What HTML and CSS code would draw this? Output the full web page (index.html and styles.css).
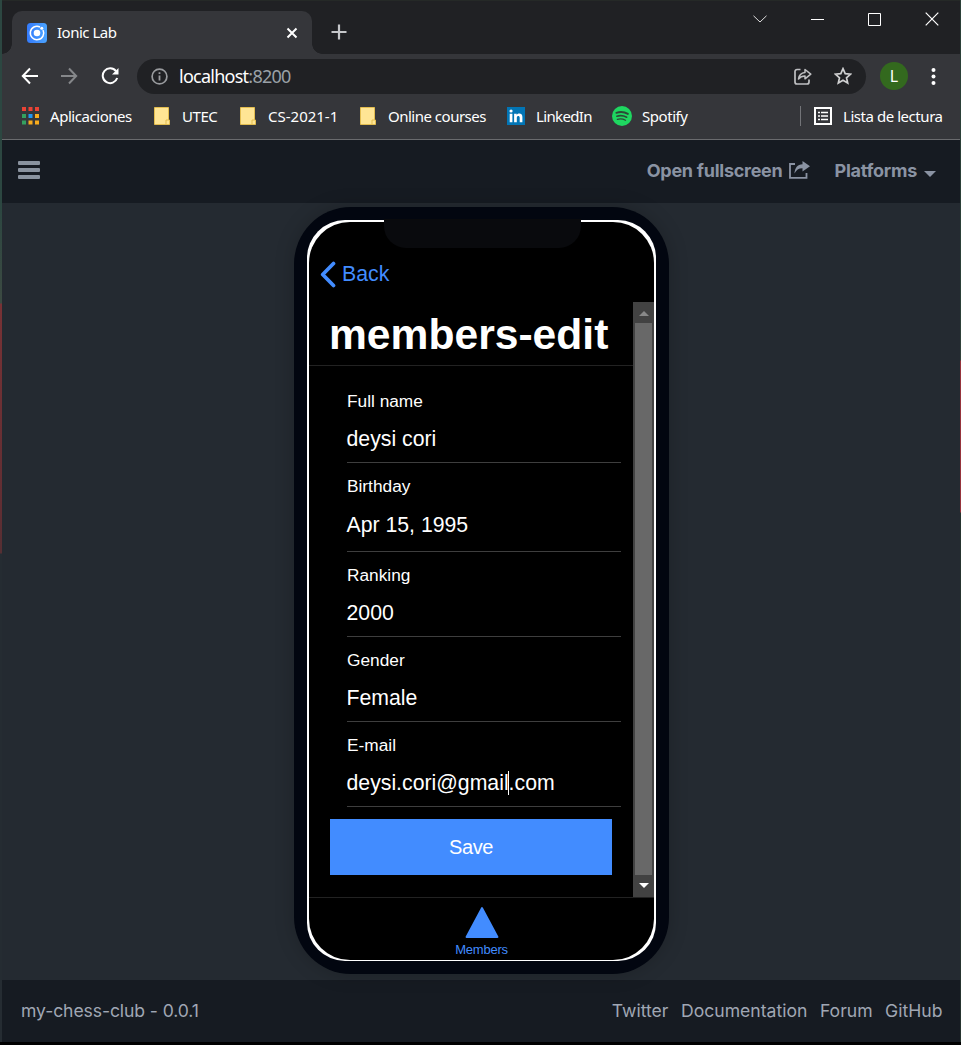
FILE: index.html
```html
<!DOCTYPE html>
<html lang="es">
<head>
<meta charset="utf-8">
<title>Ionic Lab</title>
<link rel="stylesheet" href="styles.css">
</head>
<body>
<div class="desktop">
<div class="edge-left"></div>
<div class="window">
  <div class="tabstrip">
    <div class="tab">
      <svg class="favicon" width="20" height="20" viewBox="0 0 20 20"><defs><linearGradient id="fav"><stop stop-color="#347bfc"/><stop offset="1" stop-color="#4ba4ff"/></linearGradient></defs><rect width="20" height="20" rx="3.5" fill="url(#fav)"/><circle cx="10" cy="10" r="3.3" fill="#fff"/><path d="M13 4a6.7 6.7 0 1 0 3 3" fill="none" stroke="#fff" stroke-width="1.5"/><circle cx="14.8" cy="5.3" r="1.5" fill="#fff"/></svg>
      <span class="tab-title">Ionic Lab</span>
      <svg class="tab-close" width="12" height="12" viewBox="0 0 12 12"><path d="M1.5 1.5l9 9M10.500 1.500l-9 9" stroke="#fff" stroke-width="2"/></svg>
    </div>
    <svg class="new-tab" width="16" height="16" viewBox="0 0 16 16"><path d="M8 .5v15M.5 8h15" stroke="#c5c7ca" stroke-width="2.200"/></svg>
    <div class="controls">
      <svg width="14" height="8" viewBox="0 0 14 8"><path d="M.5.8L7 7 13.500.8" fill="none" stroke="#ddd"/></svg>
      <svg width="13" height="13" viewBox="0 0 13 13"><path d="M0 6.500h13" stroke="#fff"/></svg>
      <svg width="13" height="13" viewBox="0 0 13 13"><path d="M.5.5h12v12H.5z" fill="none" stroke="#fff"/></svg>
      <svg width="14" height="14" viewBox="0 0 14 14"><path d="M.7.7l12.600 12.600M13.300.7L.7 13.300" stroke="#fff" stroke-width="1.200"/></svg>
    </div>
  </div>
  <div class="toolbar">
    <svg class="nav-back" width="18" height="18" viewBox="0 0 18 18"><path d="M17 9H2M9 1.500L1.800 9 9 16.500" fill="none" stroke="#fff" stroke-width="2"/></svg>
    <svg class="nav-forward" width="18" height="18" viewBox="0 0 18 18"><path d="M1 9h15M9 1.500L16.200 9 9 16.500" fill="none" stroke="#85878a" stroke-width="2"/></svg>
    <svg class="nav-reload" width="18" height="18" viewBox="0 0 18 18"><path d="M15 4.200A7.400 7.400 0 1 0 16.200 11" fill="none" stroke="#fff" stroke-width="2"/><path d="M17.500 1v6.500H11z" fill="#fff"/></svg>
    <div class="omnibox">
      <svg width="17" height="17" viewBox="0 0 17 17"><circle cx="8.500" cy="8.500" r="7.400" fill="none" stroke="#999b9e" stroke-width="1.700"/><path d="M8.500 7.400v5M8.500 4.300v1.800" stroke="#999b9e" stroke-width="1.800"/></svg>
      <span class="url">localhost<span class="port">:8200</span></span>
      <svg class="share" width="18" height="17" viewBox="0 0 18 17"><path d="M6.500 1.500H3a2 2 0 0 0-2 2V14a2 2 0 0 0 2 2h10a2 2 0 0 0 2-2v-2.500" fill="none" stroke="#bfc0c2" stroke-width="1.700"/><path d="M4.500 11C5 7 7.500 5 11 4.600V1.500L16.800 6.200 11 10.800V8C8 8 6 9 4.500 11z" fill="none" stroke="#bfc0c2" stroke-width="1.500" stroke-linejoin="round"/></svg>
      <svg class="star" width="18" height="18" viewBox="0 0 18 18"><path d="M9 1.700l2.200 5 5.400.5-4.100 3.600 1.200 5.300L9 13.300l-4.700 2.800 1.200-5.300L1.400 7.200l5.400-.5z" fill="none" stroke="#cfd0d1" stroke-width="1.700"/></svg>
    </div>
    <div class="avatar">L</div>
    <svg class="dots" width="5" height="17" viewBox="0 0 5 17"><g fill="#fff"><circle cx="2.500" cy="2" r="2"/><circle cx="2.500" cy="8.500" r="2"/><circle cx="2.500" cy="15" r="2"/></g></svg>
  </div>
  <div class="bookmarks">
    <svg class="ico-apps" width="17" height="18" viewBox="0 0 17 18"><g fill="#ea4335"><path d="M0 0h4v4H0zM6.500 0h4v4h-4zM13 0h4v4h-4z"/></g><path d="M0 7h4v4H0zM0 13.500h4v4H0z" fill="#34a060"/><path d="M6.500 7h4v4h-4z" fill="#2196f3"/><path d="M13 7h4v4h-4zM6.500 13.500h4v4h-4zM13 13.500h4v4h-4z" fill="#f9ab1c"/></svg>
    <span class="bm bm-apps">Aplicaciones</span>
    <svg class="folder" width="16" height="18" viewBox="0 0 16 18"><path d="M.5.5h14V13h1v4.500H.5z" fill="#ffe594" stroke="#e3bd4f"/><path d="M12 17v-4h2.500" fill="none" stroke="#e3bd4f"/></svg>
    <span class="bm bm-utec">UTEC</span>
    <svg class="folder" width="16" height="18" viewBox="0 0 16 18"><path d="M.5.5h14V13h1v4.500H.5z" fill="#ffe594" stroke="#e3bd4f"/><path d="M12 17v-4h2.500" fill="none" stroke="#e3bd4f"/></svg>
    <span class="bm bm-cs">CS-2021-1</span>
    <svg class="folder" width="16" height="18" viewBox="0 0 16 18"><path d="M.5.5h14V13h1v4.500H.5z" fill="#ffe594" stroke="#e3bd4f"/><path d="M12 17v-4h2.500" fill="none" stroke="#e3bd4f"/></svg>
    <span class="bm bm-online">Online courses</span>
    <svg class="ico-in" width="18" height="18" viewBox="0 0 18 18"><path d="M0 0h18v18H0z" fill="#0275b5"/><path d="M2.700 6.800h2.700v8.500H2.700zM7.100 6.800h2.600V8c1.500-2.200 5.700-2 5.700 2v5.300h-2.700v-4.600c0-2.500-2.900-2.200-2.900 0v4.600H7.100z" fill="#fff"/><circle cx="4.050" cy="4" r="1.600" fill="#fff"/></svg>
    <span class="bm bm-in">LinkedIn</span>
    <svg class="ico-spot" width="20" height="20" viewBox="0 0 20 20"><circle cx="10" cy="10" r="10" fill="#1ed760"/><g fill="none" stroke="#2d4937" stroke-linecap="round"><path d="M4.300 6.800c4-1.200 8.300-.8 11.600 1.100" stroke-width="1.900"/><path d="M4.900 10.200c3.500-1 6.800-.6 9.800 1" stroke-width="1.600"/><path d="M5.400 13.300c3-.7 5.600-.4 8.100 1" stroke-width="1.300"/></g></svg>
    <span class="bm bm-spot">Spotify</span>
    <span class="divider"></span>
    <svg class="ico-list" width="18" height="18" viewBox="0 0 18 18"><path d="M1 1h16v16H1z" fill="none" stroke="#fff" stroke-width="2"/><path d="M4 5.500h2M7 5.500h7M4 9h2M7 9h7M4 12.500h2M7 12.500h7" stroke="#fff" stroke-width="1.700"/></svg>
    <span class="bm bm-list">Lista de lectura</span>
  </div>

  <header class="lab-header">
    <div class="burger"><i></i><i></i><i></i></div>
    <a class="fullscreen">Open fullscreen</a>
    <svg class="open-ico" width="21" height="18" viewBox="0 0 21 18"><path d="M6 3H1v13.800h16.500V12" fill="none" stroke="#8a93a3" stroke-width="1.800"/><path d="M13.500 0L21 5.300l-7.500 5.200V7.200C9.500 7.200 7.300 9 5.500 12.500 5.800 7 8.500 3.500 13.500 3.300z" fill="#8a93a3"/></svg>
    <a class="platforms">Platforms</a>
    <i class="caret"></i>
  </header>

  <main class="stage">
    <div class="phone">
      <div class="bezel">
        <div class="screen">
          <div class="back"><svg width="16" height="27" viewBox="0 0 16 27"><path d="M13.500 2.500L2.700 13.500l10.800 11" fill="none" stroke="#428cff" stroke-width="3.700" stroke-linecap="round" stroke-linejoin="round"/></svg><span>Back</span></div>
          <div class="content">
            <div class="pane">
              <h1>members-edit</h1>
              <div class="form">
                <div class="item"><label>Full name</label><p>deysi cori</p></div>
                <div class="item date"><label>Birthday</label><p>Apr 15, 1995</p></div>
                <div class="item"><label>Ranking</label><p>2000</p></div>
                <div class="item"><label>Gender</label><p>Female</p></div>
                <div class="item"><label>E-mail</label><p>deysi.cori@gmail<span class="cursor"></span>.com</p></div>
              </div>
              <div class="save">Save</div>
            </div>
            <div class="scrollbar"><i class="up"></i><div class="thumb"></div><i class="down"></i></div>
          </div>
          <div class="tabbar">
            <svg width="34" height="31" viewBox="0 0 34 31"><path d="M17 1L32.500 30H1.500z" fill="#428cff" stroke="#428cff" stroke-width="1.800" stroke-linejoin="round"/></svg>
            <span>Members</span>
          </div>
        </div>
      </div>
      <div class="notch"></div>
    </div>
  </main>
  <footer class="lab-footer">
    <span class="app-name">my-chess-club - 0.0.1</span>
    <a>Twitter</a><a>Documentation</a><a>Forum</a><a>GitHub</a>
  </footer>
</div>
<div class="edge-right"></div>
</div>
</body>
</html>
```

FILE: styles.css
```css
* { box-sizing: border-box; }
body { margin: 0; background: #000; }
svg { display: block; flex: none; }
.desktop { display: grid; grid-template-columns: 2px 958px 1px; width: 961px; height: 1042px; }
.edge-left { background: linear-gradient(#2c4741 0 203px, #3c4a42 303px, #783235 304px, #602e33 510px, #552f33 553px, #252c32 554px); }
.edge-right { background: linear-gradient(#2b4038 0 303px, #33423b 360px, #96343c 361px 512px, #26342f 513px); }
.window { display: flex; flex-direction: column; overflow: hidden; border-top: 1px solid #252927; font-family: "Noto Sans", sans-serif; color: #fff; }

.tabstrip { height: 53px; flex: none; background: #202124; display: flex; align-items: flex-start; }
.tab { position: relative; width: 300px; height: 43px; margin: 10px 0 0 10px; border-radius: 10px 10px 0 0; background: #35363a; display: flex; align-items: center; padding: 0 14px 0 15px; }
.tab::before, .tab::after { content: ""; position: absolute; bottom: 0; width: 10px; height: 10px; }
.tab::before { left: -10px; background: radial-gradient(circle at 0 0, #202124 9.500px, #35363a 10px); }
.tab::after { right: -10px; background: radial-gradient(circle at 100% 0, #202124 9.500px, #35363a 10px); }
.tab-title { margin-left: 10px; flex: 1; padding-bottom: 2px; font-size: 15px; letter-spacing: -.5px; }
.new-tab { margin: 23px 0 0 19px; }
.controls { display: flex; align-items: center; gap: 44px; margin: 10px 21px 0 auto; height: 16px; }
.toolbar { height: 44px; flex: none; background: #35363a; display: flex; align-items: center; padding-left: 19px; }
.nav-forward { margin-left: 21px; }
.nav-reload { margin-left: 23px; }
.omnibox { width: 729px; height: 35px; margin-left: 18px; border-radius: 18px; background: #202124; display: flex; align-items: center; padding: 0 14px; }
.url { flex: 1; margin-left: 11px; font-size: 18px; letter-spacing: -.75px; }
.port { color: #9aa0a6; }
.star { margin-left: 22px; }
.avatar { width: 28px; height: 28px; margin-left: 14px; border-radius: 50%; background: #33691e; display: flex; align-items: center; justify-content: center; font-size: 16px; }
.dots { margin-left: 23px; }
.bookmarks { height: 42px; flex: none; background: #35363a; border-bottom: 1px solid #6a6b6e; display: flex; align-items: center; padding: 0 0 5px 20px; font-size: 15px; white-space: nowrap; }
.bm { letter-spacing: -.45px; }
.bm-apps { width: 104px; margin-left: 11px; }
.bm-utec { width: 58px; margin-left: 12px; }
.bm-cs { width: 92px; margin-left: 12px; letter-spacing: 0; }
.bm-online { width: 119px; margin-left: 12px; letter-spacing: -.5px; }
.bm-in { width: 76px; margin-left: 11px; letter-spacing: -.65px; }
.bm-spot { margin-left: 10px; }
.divider { width: 1px; height: 20px; background: #737478; margin-left: auto; }
.ico-list { margin-left: 13px; }
.bm-list { width: 100px; margin: 0 17px 0 11px; }

.lab-header { height: 63px; flex: none; background: #161b22; display: flex; align-items: center; padding: 0 24px 1px 16px; font: 700 18px/62px Inter, sans-serif; letter-spacing: -.26px; color: #8a93a3; }
.burger { width: 22px; display: grid; gap: 3px; margin: 0 auto 3px 0; }
.burger i { height: 4px; border-radius: 1px; background: #8a939f; }
.open-ico { margin: 0 25px 2px 6px; }
.caret { margin: 6px 0 0 7px; border: 6px solid transparent; border-top-color: #8a93a3; border-bottom: 0; }
.stage { height: 777px; flex: none; background: #242a31; display: flex; justify-content: center; align-items: flex-start; padding: 4px 0 0; }
.phone { position: relative; width: 375px; height: 767px; margin-left: 1px; padding: 13px; border-radius: 57px; background: #020610; box-shadow: 0 0 20px rgba(0,0,0,.2); }
.bezel { width: 349px; height: 741px; padding: 2px 2px 1px; border-radius: 38px; background: #fff; }
.notch { position: absolute; left: 90px; top: 12px; width: 197px; height: 29px; border-radius: 0 0 22px 22px; background: #090a0d; }
.screen { height: 738px; border-radius: 41px; background: #000; overflow: hidden; display: flex; flex-direction: column; font-family: "Liberation Sans", Arial, sans-serif; }
.back { height: 80px; flex: none; padding: 39px 0 0 11px; display: flex; gap: 6px; font-size: 21.300px; line-height: 26px; color: #428cff; }
.content { height: 595px; flex: none; display: flex; }
.pane { width: 324px; }
h1 { height: 64px; margin: 0; padding-left: 20px; border-bottom: 1px solid #222; font-size: 42.600px; line-height: 65px; font-weight: 700; }
.form { padding: 12px 12px 0 38px; }
.item { height: 85px; padding-top: 13px; border-bottom: 1px solid #3e3e3e; }
.item.date { height: 89px; }
label { display: block; font-size: 17.300px; line-height: 20px; }
p { margin: 16px 0 0 -.5px; font-size: 21.250px; line-height: 24px; white-space: nowrap; }
.date p { margin-top: 17px; }
.cursor { display: inline-block; width: 1px; height: 24px; margin: 0 0 0 -1px; background: #fff; vertical-align: top; }
.save { width: 282px; height: 56px; margin: 12px 0 0 21px; background: #428cff; text-align: center; font-size: 20px; letter-spacing: -.4px; line-height: 56px; }
.scrollbar { width: 21px; background: #424242; padding: 0 2px 0 2px; display: flex; flex-direction: column; align-items: center; }
.thumb { width: 17px; height: 552px; background: #686868; }
.up { margin: 9px 0 7px; border: 5px solid transparent; border-bottom-color: #888; border-top: 0; }
.down { margin-top: 8px; border: 5px solid transparent; border-top-color: #fff; border-bottom: 0; }
.tabbar { height: 63px; flex: none; border-top: 1px solid #222; padding-top: 9px; display: flex; flex-direction: column; align-items: center; gap: 3px; font-size: 13px; letter-spacing: -.25px; line-height: 17px; color: #428cff; }
.lab-footer { height: 62px; flex: none; background: #161b22; display: flex; align-items: center; gap: 12.500px; padding: 0 17.500px 0 19px; font: 17.600px/62px Inter, sans-serif; color: #a0a7b4; }
.app-name { margin-right: auto; letter-spacing: -.1px; }
```
